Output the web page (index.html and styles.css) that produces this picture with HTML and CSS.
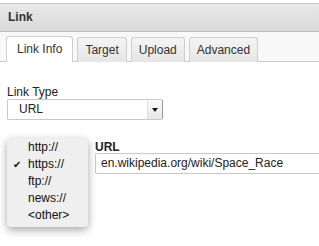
FILE: index.html
```html
<!DOCTYPE html>
<html lang="en">
<head>
    <meta charset="UTF-8">
    <title>Link</title>
    <link rel="stylesheet" href="styles.css">
</head>
<body>
    <div class="dialog">
        <div class="titlebar">Link</div>
        <div class="tabs">
            <div class="tab active">Link Info</div>
            <div class="tab">Target</div>
            <div class="tab">Upload</div>
            <div class="tab">Advanced</div>
        </div>
        <div class="content">
            <label class="field-label">Link Type</label>
            <div class="select">
                <span class="select-value">URL</span>
                <span class="select-arrow"></span>
            </div>

            <div class="url-row">
                <div class="protocol">
                    <!-- lista aberta do protocolo -->
                    <ul class="menu">
                        <li>http://</li>
                        <li class="checked">https://</li>
                        <li>ftp://</li>
                        <li>news://</li>
                        <li>&lt;other&gt;</li>
                    </ul>
                </div>
                <div class="url-field">
                    <label class="field-label bold">URL</label>
                    <div class="text-input">en.wikipedia.org/wiki/Space_Race</div>
                </div>
            </div>
        </div>
    </div>
</body>
</html>
```

FILE: styles.css
```css
html, body {
    height: 100%;
}

body {
    margin: 0;
    font-family: "Liberation Sans", Arial, sans-serif;
    font-size: 12px;
    color: #222;
    background: #fff;
}

.dialog {
    padding-top: 3px;
}

.titlebar {
    height: 27px;
    line-height: 27px;
    padding-left: 8px;
    font-weight: bold;
    color: #333;
    border-top: 1px solid #c9c9c9;
    border-bottom: 1px solid #bdbdbd;
    background: linear-gradient(to bottom, #e9e9e9, #d8d8d8);
}

.tabs {
    display: flex;
    gap: 4px;
    padding: 5px 0 0 6px;
    border-bottom: 1px solid #c8c8c8;
    background: #f8f8f8;
}

.tab {
    height: 24px;
    line-height: 24px;
    padding: 0 7px;
    border: 1px solid #cfcfcf;
    border-bottom: none;
    border-radius: 3px 3px 0 0;
    background: linear-gradient(to bottom, #f4f4f4, #e6e6e6);
    color: #333;
    margin-bottom: -1px;
}

.tab.active {
    background: #fff;
    height: 25px;
    margin-top: -1px;
    padding: 0 10px;
}

.content {
    padding: 23px 0 0 7px;
}

.field-label {
    display: block;
    line-height: 14px;
    margin-bottom: 0;
    color: #222;
}

.bold {
    font-weight: bold;
    line-height: 12px;
}

.select {
    width: 154px;
    height: 19px;
    display: flex;
    border: 1px solid #c9c9c9;
    border-right-color: #999;
    border-radius: 2px;
    background: #fff;
}

.select-value {
    flex: 1;
    line-height: 19px;
    padding-left: 11px;
}

.select-arrow {
    width: 14px;
    position: relative;
    background: linear-gradient(to bottom, #fafafa, #e8e8e8);
    border-left: 1px solid #e0e0e0;
}

.select-arrow::after {
    content: "";
    position: absolute;
    left: 4px;
    top: 8px;
    border-left: 3px solid transparent;
    border-right: 3px solid transparent;
    border-top: 4px solid #111;
}

.url-row {
    display: flex;
    margin-top: 21px;
    gap: 7px;
}

.protocol {
    width: 81px;
    position: relative;
}

.menu {
    position: absolute;
    top: -3px;
    left: 0;
    width: 81px;
    margin: 0;
    padding: 1px 0 3px;
    list-style: none;
    background: #efefef;
    border-radius: 4px;
    box-shadow: 0 3px 9px rgba(0, 0, 0, 0.35);
    z-index: 2;
}

.menu li {
    height: 17px;
    line-height: 17px;
    padding-left: 21px;
    position: relative;
    color: #111;
}

.menu li.checked::before {
    content: "\2714";
    position: absolute;
    left: 6px;
    font-family: "DejaVu Sans", sans-serif;
    font-size: 10px;
}

.url-field {
    flex: 1;
}

.text-input {
    height: 19px;
    line-height: 19px;
    padding-left: 5px;
    border: 1px solid #c9c9c9;
    border-right: none;
    border-radius: 2px 0 0 2px;
    white-space: nowrap;
}
```
